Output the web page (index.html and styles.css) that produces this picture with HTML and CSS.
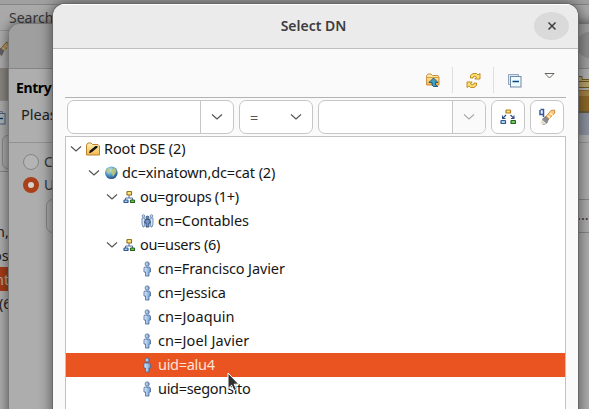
FILE: index.html
```html
<!DOCTYPE html>
<html lang="en">
<head>
<meta charset="utf-8">
<title>Select DN</title>
<link rel="stylesheet" href="styles.css">
</head>
<body>
<svg width="0" height="0" class="defs" aria-hidden="true">
  <defs>
    <linearGradient id="gold" x2="0" y2="1"><stop stop-color="#fff2b8"/><stop offset="1" stop-color="#f2b84a"/></linearGradient>
    <linearGradient id="blue"><stop stop-color="#e2effb"/><stop offset="1" stop-color="#6d9aca"/></linearGradient>
    <radialGradient id="sea" cx=".4" cy=".3" r=".7"><stop stop-color="#c9ecfa"/><stop offset=".55" stop-color="#4f9fc9"/><stop offset="1" stop-color="#284c88"/></radialGradient>
    <symbol id="chev" viewBox="0 0 12 8"><path d="M1 1.500L6 6l5-4.500" fill="none" stroke="currentColor" stroke-width="1.200"/></symbol>
    <symbol id="person" viewBox="0 0 16 16"><path d="M5.500 6h5l1 1.500V11H10v4H6.500v-4H5V7z" fill="url(#blue)" stroke="#41669b" stroke-width=".8"/><circle cx="8.200" cy="3" r="2.100" fill="url(#blue)" stroke="#41669b" stroke-width=".8"/></symbol>
    <symbol id="ou" viewBox="0 0 16 16"><path d="M8 6v3M4.500 12V9h7v3" fill="none" stroke="#52719e"/><rect x="6" y="2.500" width="4.500" height="3.500" rx=".6" fill="#ffe37a" stroke="#95711a" stroke-width="1.200"/><rect x="3" y="11" width="4" height="2.500" rx=".6" fill="#a9cff5" stroke="#31588f" stroke-width="1.200"/><rect x="9.500" y="11" width="4" height="2.500" rx=".6" fill="#72c74f" stroke="#26631f" stroke-width="1.200"/></symbol>
    <symbol id="torch" viewBox="0 0 18 18"><path d="M7 9.500l6-7 3.500-.5.3 3-7 7z" fill="#f9c87a" stroke="#c98334" stroke-width=".9"/><path d="M9.500 7.500l3 3M12 5l3 2.500" stroke="#fff0c0" stroke-width="1.300"/><path d="M5.500 10L8 8.500l2.500 2.500-1.500 4-3 1.500c-2 0-3-2-1.500-5z" fill="#8d8a91" stroke="#6c6970" stroke-width=".6"/><path d="M4 11.500l4.500 4-4 1-3-1z" fill="#f5edd5" opacity=".85"/></symbol>
    <symbol id="collapse" viewBox="0 0 14 14"><path d="M.5 10.500V.5h10v2" fill="#dce9f3" stroke="#8ea5bd"/><path d="M.5 10.500h2" stroke="#8ea5bd"/><rect x="2.500" y="2.500" width="10.500" height="10.500" fill="#effaff" stroke="#7087a6"/><path d="M4.500 7.500h6.500" stroke="#064a83" stroke-width="1.300"/></symbol>
  </defs>
</svg>

<div class="desktop">
  <section class="window main-window">
    <div class="main-title"></div>
    <div class="main-menu">Search</div>
    <div class="main-tools"><svg width="18" height="18"><use href="#torch"/></svg></div>
    <div class="main-band"></div>
    <div class="main-tab"><svg width="14" height="14"><use href="#collapse"/></svg></div>
    <div class="main-field"><i></i></div>
    <div class="main-tree">
      <p>n,</p><p class="wide">os</p><p class="picked"><span>nt</span></p><p class="count">(6</p>
    </div>
  </section>

  <section class="window wizard">
    <div class="wizard-title"><i class="wizard-close"></i></div>
    <div class="wizard-banner">
      <div><h2>Entry</h2><p>Please</p></div>
      <svg width="31" height="73" viewBox="0 0 31 73"><path d="M0 8h14v3h17v7H0z" fill="#b4a06b"/><path d="M0 7.500h14v3h17M0 12.500h31M0 18.500h31" fill="none" stroke="#6c581f"/><path d="M0 21h31v21H0z" fill="#8c6827"/><path d="M0 22h31v5H0z" fill="#a08143"/><path d="M0 43h31" stroke="#514016" stroke-width="1.500"/><path d="M0 44h31v22H0z" fill="#8c91a0"/></svg>
    </div>
    <div class="wizard-options">
      <label><i class="radio"></i>C</label>
      <label><i class="radio on"></i>U</label>
      <div class="wizard-field"><span>...</span></div>
    </div>
  </section>

  <section class="window dialog">
    <header><span></span><h1>Select DN</h1><button class="close" aria-label="Close"><svg width="10" height="10" viewBox="0 0 10 10"><path d="M1.500 1.500l7 7M8.500 1.500l-7 7" stroke="#3d3d3d" stroke-width="1.500"/></svg></button></header>
    <div class="content">
      <div class="toolbar">
        <svg class="t-up" width="14" height="14" viewBox="0 0 14 14"><path d="M.6 12V2.500L2 1h3l1.500 1.500H12L13 4v8z" fill="url(#gold)" stroke="#c98f43"/><path d="M1 4.500h12" stroke="#d59f48"/><path d="M7.500 5L12 9.500H9.500V12l2.500 1.500H7.500L6 12V9.500H3z" fill="#42a0bd" stroke="#214f7b" stroke-width=".9"/></svg>
        <i class="rule r1"></i>
        <svg class="t-sync" width="15" height="16" viewBox="0 0 15 16"><path id="half" d="M4.500 6V3.500L7 1.500h3.500L12 3l2-1.500V7H8.800L10.500 5 9 4 7 5v1z" fill="#ffe06e" stroke="#b98116" stroke-width=".9"/><use href="#half" transform="rotate(180 7.500 8.500)"/></svg>
        <i class="rule r2"></i>
        <svg class="t-collapse" width="14" height="14"><use href="#collapse"/></svg>
        <svg class="t-menu" width="11" height="6" viewBox="0 0 11 6"><path d="M1 .5h9L5.500 5z" fill="#fff" stroke="#66655f"/></svg>
      </div>
      <div class="filters">
        <div class="combo attr"><span></span><b><svg width="12" height="8"><use href="#chev"/></svg></b></div>
        <div class="select"><span>=</span><svg width="12" height="8"><use href="#chev"/></svg></div>
        <div class="combo value"><span></span><b><svg width="12" height="8"><use href="#chev"/></svg></b></div>
        <button class="tool"><svg width="16" height="16" viewBox="0 0 16 16"><path d="M6 6L3 9M10.500 6l3 3M2.500 6.500v3h3M14 6.500v3h-3" fill="none" stroke="#314f86" stroke-width="1.100"/><rect x="6" y="1" width="4.500" height="3" rx=".6" fill="#ffe37a" stroke="#ad791c" stroke-width="1.200"/><rect x="1" y="11.500" width="4.500" height="3" rx=".6" fill="#add2f1" stroke="#31588f" stroke-width="1.200"/><rect x="11" y="11.500" width="4.500" height="3" rx=".6" fill="#7bc967" stroke="#26631f" stroke-width="1.200"/></svg></button>
        <button class="tool"><svg width="18" height="18" viewBox="0 0 18 18"><use href="#torch"/><path d="M2 2v4.500h3.500V1.500H2.500M5.500 6v3" fill="#eaf4ff" stroke="#355a99" stroke-width="1.500"/></svg></button>
      </div>
      <div class="tree">
        <div class="row l0"><svg class="arrow"><use href="#chev"/></svg><svg class="icon" viewBox="0 0 16 16"><path d="M1.500 14V4L3 2h3l1.500 1.500H13L14.500 5v9z" fill="url(#gold)" stroke="#b98232"/><path d="M4 12l1-2.500 5.500-4.500h2v1.500L7 11l-2 1z" fill="#111"/></svg><span>Root DSE (2)</span></div>
        <div class="row l1"><svg class="arrow"><use href="#chev"/></svg><svg class="icon" viewBox="0 0 16 16"><circle cx="8.300" cy="7.800" r="6.300" fill="url(#sea)"/><path d="M3 5l2-2 2 1 .5 2-2 3-2-2zM9 4l3-1 1.500 3-1 2-2.500 4-1-3-1-2z" fill="#c1c778" opacity=".85"/></svg><span>dc=xinatown,dc=cat (2)</span></div>
        <div class="row l2"><svg class="arrow"><use href="#chev"/></svg><svg class="icon"><use href="#ou"/></svg><span>ou=groups (1+)</span></div>
        <div class="row l3"><svg class="icon" viewBox="0 0 16 16"><g fill="#d4e4f4" stroke="#5878a3" stroke-width=".8"><circle cx="4.500" cy="3" r="1.300"/><circle cx="12.500" cy="3" r="1.300"/><path d="M3 5h3v5l-1 4H4l-1-3zM11 5h3v6l-1 3h-1l-1-4z"/></g><g fill="#7294c5" stroke="#253d6c" stroke-width=".8"><circle cx="8.500" cy="4.500" r="1.400"/><path d="M6.500 6.500h4l1 3.500H10v4H7v-4H5.500z"/></g></svg><span>cn=Contables</span></div>
        <div class="row l2"><svg class="arrow"><use href="#chev"/></svg><svg class="icon"><use href="#ou"/></svg><span>ou=users (6)</span></div>
        <div class="row l3"><svg class="icon"><use href="#person"/></svg><span>cn=Francisco Javier</span></div>
        <div class="row l3"><svg class="icon"><use href="#person"/></svg><span>cn=Jessica</span></div>
        <div class="row l3 loose"><svg class="icon"><use href="#person"/></svg><span>cn=Joaquin</span></div>
        <div class="row l3 loose"><svg class="icon"><use href="#person"/></svg><span>cn=Joel Javier</span></div>
        <div class="row l3 tight selected"><svg class="icon"><use href="#person"/></svg><span>uid=alu4</span></div>
        <div class="row l3 tight"><svg class="icon"><use href="#person"/></svg><span>uid=segonsito</span></div>
      </div>
    </div>
  </section>
  <svg class="cursor" width="14" height="21" viewBox="0 0 14 21"><path d="M1 1v15.500l3.600-3.300 2.300 5.300 2.600-1.100-2.300-5.200h4.600z" fill="#303030" stroke="#fff"/></svg>
</div>
</body>
</html>
```

FILE: styles.css
```css
* { box-sizing: border-box; }
body { margin: 0; font: 14.5px/24px "Noto Sans", sans-serif; color: #161616; }
h1, h2, p { margin: 0; }
button { padding: 0; font: inherit; }
svg { display: block; flex: none; }
.defs { position: absolute; }
.desktop { position: relative; width: 589px; height: 409px; overflow: hidden; background: #a5a5a5; }
.window { position: absolute; overflow: hidden; }

.main-window { inset: 0; background: #aaa; color: #222; }
.main-title { height: 5px; background: #a0a0a0; border-bottom: 1px solid #858585; }
.main-menu { height: 26px; padding-left: 9px; border-bottom: 1px solid #929292; line-height: 25px; font-size: 14px; color: #393939; background: #a9a9a9; }
.main-tools { height: 37px; padding-top: 9px; }
.main-tools svg { margin-left: -7px; filter: brightness(.7); }
.main-band { height: 33px; background: #888480; border-bottom: 1px solid #8b8b8b; }
.main-tab { height: 34px; padding-top: 10px; }
.main-tab svg { margin-left: -8px; filter: brightness(.7); }
.main-field { height: 37px; border-bottom: 1px solid #858585; }
.main-field i { display: block; width: 40px; height: 34px; margin-left: 2px; border: 1px solid #858585; border-radius: 6px; }
.main-tree { height: 237px; padding-top: 47px; background: #acacac; }
.main-tree p { height: 24px; line-height: 24px; text-indent: -4px; }
.main-tree .wide { text-indent: -7px; }
.main-tree .picked { background: #a33b19; color: #b5aaa5; text-indent: -5px; }
.main-tree .count { text-indent: -1px; }

.wizard { left: 8px; top: 23px; width: 620px; height: 400px; background: #adadad; border: 1px solid #777; border-radius: 12px 12px 0 0; box-shadow: 0 0 12px rgba(0,0,0,.55); }
.wizard-title { height: 45px; padding: 7px 0 0 567px; background: #9f9f9f; border-bottom: 1px solid #858585; }
.wizard-close { display: block; width: 35px; height: 28px; border-radius: 50%; background: #8c8c8c; }
.wizard-banner { height: 74px; display: flex; gap: 509px; padding-left: 7px; border-bottom: 1px solid #929292; background: #aeaeae; }
.wizard-banner > div { flex: none; width: 45px; padding-top: 7px; color: #202020; }
.wizard-banner > svg { margin-left: -2px; }
.wizard-banner h2 { font-size: 14px; line-height: 24px; color: #000; letter-spacing: -.4px; }
.wizard-banner p { padding: 2px 0 0 5px; }
.wizard-options { padding: 7px 0 0 14px; color: #333; }
.wizard-options label { display: flex; align-items: center; gap: 5px; height: 23px; font-size: 14px; }
.radio { width: 16px; height: 16px; border: 1px solid #858585; border-radius: 50%; background: #b4b4b4; }
.radio.on { background: #d8d0cb; border: 5px solid #a94019; }
.wizard-field { width: 640px; height: 34px; margin: 3px 0 0 23px; padding-left: 530px; border: 1px solid #858585; border-radius: 7px; line-height: 28px; }

.dialog { left: 53px; top: 4px; width: 525px; height: 420px; background: #fafafa; border-radius: 12px 12px 0 0; box-shadow: 0 0 0 1px #686868, 0 0 14px 1px rgba(0,0,0,.55); }
.dialog header { display: grid; grid-template-columns: 1fr auto 1fr; align-items: center; height: 45px; padding: 0 9px 2px 5px; border-top: 1px solid #fff; border-bottom: 1px solid #bdbdbd; background: #ebebeb; }
.dialog h1 { font-size: 14px; font-weight: 600; letter-spacing: 0; color: #3d3d3d; }
.close { display: grid; place-items: center; justify-self: end; width: 35px; height: 28px; border: 0; border-radius: 50%; background: #dadada; }
.content { padding: 18px 12px 0; }
.toolbar { display: flex; align-items: flex-start; height: 31px; padding-left: 361px; border-bottom: 1px solid #b3b3b3; }
.t-up { margin-top: 6px; }
.rule { width: 1px; height: 26px; background: #dedede; }
.r1 { margin-left: 12px; }
.t-sync { margin: 5px 0 0 13px; }
.r2 { margin-left: 12px; }
.t-collapse { margin: 7px 0 0 14px; }
.t-menu { margin: 6px 0 0 22px; }
.filters { display: flex; height: 38px; padding: 2px 0 2px 2px; color: #555; }
.combo, .select, .tool { height: 34px; border: 1px solid #c6c6c6; border-radius: 7px; background: #fff; }
.combo { display: flex; overflow: hidden; }
.combo span { flex: 1; }
.combo b { display: grid; place-items: center; width: 33px; border-left: 1px solid #c6c6c6; }
.attr { width: 167px; }
.select { width: 74px; margin-left: 5px; display: flex; align-items: center; justify-content: space-between; padding: 0 10px; }
.value { width: 168px; margin-left: 5px; }
.value b { background: #fafafa; color: #aaa; }
.tool { display: grid; place-items: center; width: 34px; margin-left: 5px; }
.tree { height: 290px; border: 1px solid #c2c2c2; background: #fff; }
.row { display: flex; align-items: center; height: 24px; white-space: nowrap; letter-spacing: -.12px; }
.row span { height: 24px; line-height: 22px; }
.arrow { width: 12px; height: 8px; margin-right: 3px; color: #555; }
.icon { width: 16px; height: 16px; margin-right: 3px; }
.l0 { padding-left: 4px; }
.l1 { padding-left: 22px; }
.l2 { padding-left: 40px; letter-spacing: -.32px; }
.l3 { padding-left: 73px; }
.loose { letter-spacing: .1px; }
.tight { letter-spacing: -.3px; }
.selected { background: #e95420; color: #ffe1d6; }
.cursor { position: absolute; left: 227px; top: 372px; }
```
